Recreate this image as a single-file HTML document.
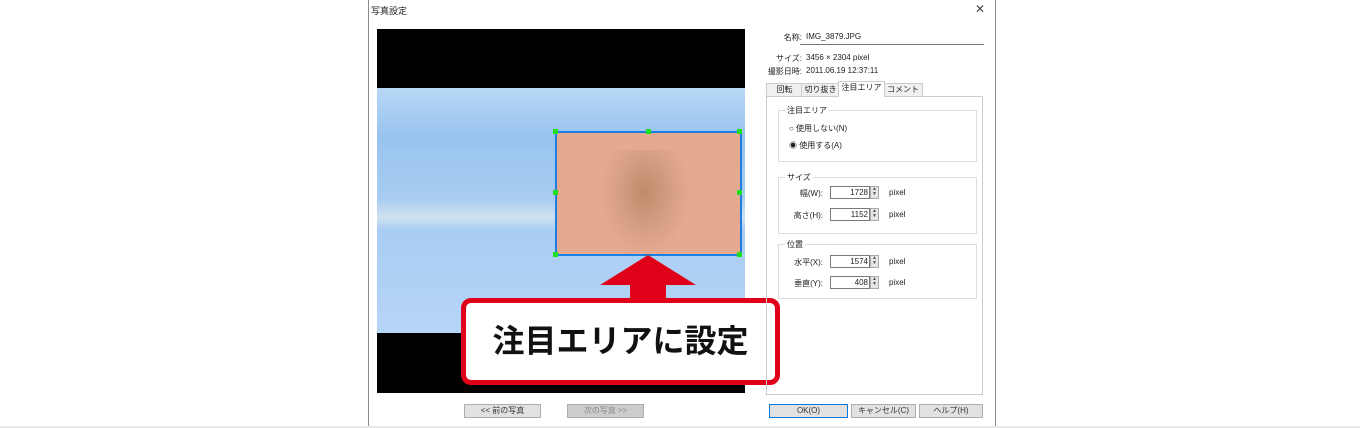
<!DOCTYPE html>
<html><head><meta charset="utf-8"><style>
body{margin:0;width:1360px;height:428px;background:#fff;position:relative;overflow:hidden;font-family:"Liberation Sans","Noto Sans CJK JP",sans-serif;font-size:9px;color:#222}
.a{position:absolute}
.btn{position:absolute;height:12px;background:#e1e1e1;border:1px solid #adadad;font-size:8px;text-align:center;line-height:12px;color:#333}
.grp{position:absolute;border:1px solid #dcdcdc}
.gl{position:absolute;background:#fff;padding:0 2px;font-size:8px;top:-6px;left:6px}
.inp{position:absolute;width:38px;height:11px;border:1px solid #7a7a7a;background:#fff;font-size:8px;text-align:right;line-height:11px;padding-right:1px;box-sizing:border-box;width:40px;height:13px}
.sp{position:absolute;width:9px;height:13px;box-sizing:border-box;border:1px solid #aaa;background:#e6e6e6;font-size:5px;line-height:5px;text-align:center;color:#555}
.lb{position:absolute;font-size:8px}
.r{text-align:right;width:60px}
</style></head><body>
<div class="a" style="left:368px;top:0;width:626px;height:426px;border:1px solid #8a8a8a;border-top:none;background:#fff"></div>
<div class="a" style="left:371px;top:4px;font-size:9px">写真設定</div>
<div class="a" style="left:975px;top:2px;font-size:12px;color:#444">✕</div>
<!-- image -->
<div class="a" style="left:377px;top:29px;width:368px;height:364px;background:#000"></div>
<div class="a" style="left:377px;top:88px;width:368px;height:245px;background:linear-gradient(180deg,#b8d8f6 0%,#98c3ef 20%,#a8ccf1 45%,#d0e2f0 53%,#a9cdf3 58%,#b5d5f6 100%)"></div>
<div class="a" style="left:555px;top:131px;width:183px;height:121px;border:2px solid #1e7fe0;background:#e4a98e"></div>
<div class="a" style="left:600px;top:150px;width:90px;height:105px;background:radial-gradient(ellipse at 50% 40%,#c08a6a 0%,#d59e84 40%,transparent 70%)"></div>
<div class="a" style="left:553px;top:129px;width:5px;height:5px;background:#1ee01e"></div>
<div class="a" style="left:646px;top:129px;width:5px;height:5px;background:#1ee01e"></div>
<div class="a" style="left:737px;top:129px;width:5px;height:5px;background:#1ee01e"></div>
<div class="a" style="left:553px;top:190px;width:5px;height:5px;background:#1ee01e"></div>
<div class="a" style="left:737px;top:190px;width:5px;height:5px;background:#1ee01e"></div>
<div class="a" style="left:553px;top:252px;width:5px;height:5px;background:#1ee01e"></div>
<div class="a" style="left:737px;top:252px;width:5px;height:5px;background:#1ee01e"></div>
<svg class="a" style="left:598px;top:254px" width="102" height="50"><polygon points="50,1 98,31 68,31 68,50 32,50 32,31 2,31" fill="#e0001a"/></svg>
<div class="a" style="left:461px;top:298px;width:309px;height:77px;border:5px solid #e0001a;border-radius:10px;background:#fff;text-align:center;line-height:77px;font-size:32px;font-weight:bold;color:#111">注目エリアに設定</div>
<!-- right info -->
<div class="lb r" style="left:742px;top:32px">名称:</div>
<div class="lb" style="left:806px;top:32px">IMG_3879.JPG</div>
<div class="a" style="left:800px;top:44px;width:184px;border-top:1px solid #777"></div>
<div class="lb r" style="left:742px;top:53px">サイズ:</div><div class="lb" style="left:806px;top:53px">3456 × 2304 pixel</div>
<div class="lb r" style="left:742px;top:66px">撮影日時:</div><div class="lb" style="left:806px;top:66px">2011.06.19 12:37:11</div>
<div class="a" style="left:766px;top:83px;width:35px;height:12px;border:1px solid #ccc;background:#f0f0f0;font-size:8px;text-align:center">回転</div>
<div class="a" style="left:801px;top:83px;width:37px;height:12px;border:1px solid #ccc;background:#f0f0f0;font-size:8px;text-align:center">切り抜き</div>
<div class="a" style="left:838px;top:81px;width:45px;height:15px;border:1px solid #ccc;border-bottom:none;background:#fff;font-size:8px;text-align:center;z-index:2">注目エリア</div>
<div class="a" style="left:883px;top:83px;width:38px;height:12px;border:1px solid #ccc;background:#f0f0f0;font-size:8px;text-align:center">コメント</div>
<div class="a" style="left:766px;top:96px;width:215px;height:297px;border:1px solid #ccc"></div>
<div class="grp" style="left:778px;top:110px;width:197px;height:50px"><span class="gl">注目エリア</span>
<div class="lb" style="left:10px;top:12px">○ 使用しない(N)</div><div class="lb" style="left:10px;top:29px">◉ 使用する(A)</div></div>
<div class="grp" style="left:778px;top:177px;width:197px;height:55px"><span class="gl">サイズ</span>
<div class="lb r" style="left:-16px;top:10px">幅(W):</div><div class="inp" style="left:51px;top:8px">1728</div><div class="sp" style="left:91px;top:8px">▲<br>▼</div><div class="lb" style="left:110px;top:10px">pixel</div>
<div class="lb r" style="left:-16px;top:32px">高さ(H):</div><div class="inp" style="left:51px;top:30px">1152</div><div class="sp" style="left:91px;top:30px">▲<br>▼</div><div class="lb" style="left:110px;top:32px">pixel</div></div>
<div class="grp" style="left:778px;top:244px;width:197px;height:53px"><span class="gl">位置</span>
<div class="lb r" style="left:-16px;top:12px">水平(X):</div><div class="inp" style="left:51px;top:10px">1574</div><div class="sp" style="left:91px;top:10px">▲<br>▼</div><div class="lb" style="left:110px;top:12px">pixel</div>
<div class="lb r" style="left:-16px;top:33px">垂直(Y):</div><div class="inp" style="left:51px;top:31px">408</div><div class="sp" style="left:91px;top:31px">▲<br>▼</div><div class="lb" style="left:110px;top:33px">pixel</div></div>
<!-- buttons -->
<div class="btn" style="left:464px;top:404px;width:75px">&lt;&lt; 前の写真</div>
<div class="btn" style="left:567px;top:404px;width:75px;background:#ccc;color:#888">次の写真 &gt;&gt;</div>
<div class="btn" style="left:769px;top:404px;width:77px;border-color:#0078d7">OK(O)</div>
<div class="btn" style="left:851px;top:404px;width:63px">キャンセル(C)</div>
<div class="btn" style="left:919px;top:404px;width:62px">ヘルプ(H)</div>
<div class="a" style="left:0;top:426px;width:1360px;height:2px;background:#e8e8e8"></div>
</body></html>
